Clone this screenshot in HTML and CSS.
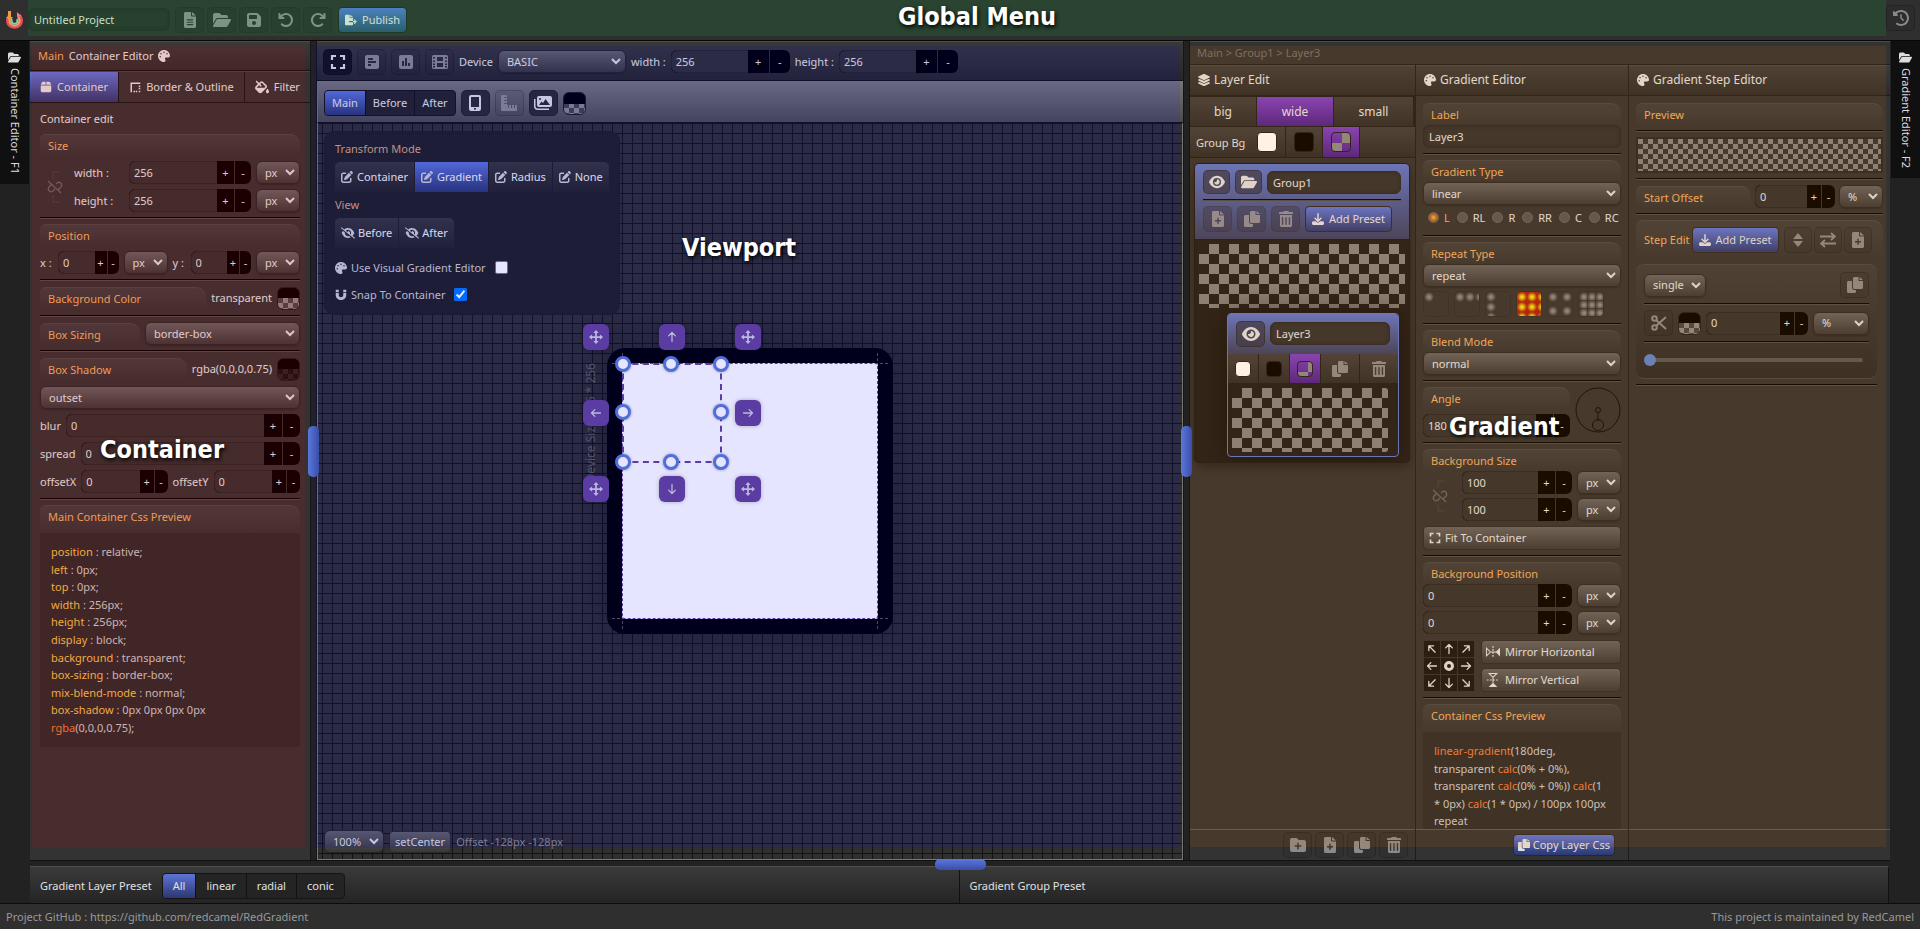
FILE: index.html
```html
<!DOCTYPE html>
<html lang="en">
<head>
<meta charset="utf-8">
<title>RedGradient</title>
<link rel="stylesheet" href="styles.css">
</head>
<body>
<svg class="sprite" aria-hidden="true">
  <symbol id="file-lines" viewBox="-64 0 512 512"><path fill-rule="evenodd" d="M48 0C22 0 0 22 0 48v416c0 26 22 48 48 48h288c26 0 48-22 48-48V144H256c-18 0-32-14-32-32V0zM256 0v112h128zM104 232h176c22 0 22 36 0 36H104c-22 0-22-36 0-36zm0 76h176c22 0 22 36 0 36H104c-22 0-22-36 0-36zm0 76h176c22 0 22 36 0 36H104c-22 0-22-36 0-36z"/></symbol>
  <symbol id="folder-open" viewBox="0 0 576 512"><path d="M88.700 223.800L0 375.800V96C0 60.700 28.700 32 64 32H181.500c17 0 33.300 6.700 45.300 18.700l26.500 26.500c12 12 28.300 18.700 45.300 18.700H416c35.300 0 64 28.700 64 64v32H144c-22.800 0-43.800 12.100-55.300 31.800zm27.600 16.100C122.100 230 132.600 224 144 224H544c11.500 0 22 6.100 27.700 16.100s5.700 22.200-.1 32.100l-112 192C453.900 474 443.400 480 432 480H32c-11.500 0-22-6.100-27.700-16.100s-5.700-22.200 .1-32.100l112-192z"/></symbol>
  <symbol id="floppy" viewBox="-32 0 512 512"><path fill-rule="evenodd" d="M64 32C28.700 32 0 60.700 0 96V416c0 35.300 28.700 64 64 64H384c35.300 0 64-28.700 64-64V173.300c0-17-6.700-33.300-18.700-45.300L352 50.700C340 38.700 323.700 32 306.700 32H64zm0 96c0-17.700 14.300-32 32-32H288c17.700 0 32 14.300 32 32v64c0 17.700-14.300 32-32 32H96c-17.700 0-32-14.300-32-32V128zM224 288a64 64 0 1 1 0 128 64 64 0 1 1 0-128z"/></symbol>
  <symbol id="undo" viewBox="0 0 512 512"><path d="M125.700 160H176c17.700 0 32 14.300 32 32s-14.300 32-32 32H48c-17.700 0-32-14.300-32-32V64c0-17.700 14.300-32 32-32s32 14.300 32 32v51.200L97.600 97.600c87.500-87.500 229.300-87.500 316.800 0s87.500 229.300 0 316.800s-229.300 87.500-316.800 0c-12.500-12.500-12.500-32.800 0-45.300s32.800-12.500 45.300 0c62.500 62.500 163.800 62.500 226.300 0s62.500-163.800 0-226.300s-163.800-62.500-226.300 0L125.700 160z"/></symbol>
  <symbol id="redo" viewBox="0 0 512 512"><path transform="matrix(-1 0 0 1 512 0)" d="M125.700 160H176c17.700 0 32 14.300 32 32s-14.300 32-32 32H48c-17.700 0-32-14.300-32-32V64c0-17.700 14.300-32 32-32s32 14.300 32 32v51.200L97.600 97.600c87.500-87.500 229.300-87.500 316.800 0s87.500 229.300 0 316.800s-229.300 87.500-316.800 0c-12.500-12.500-12.500-32.800 0-45.300s32.800-12.500 45.300 0c62.500 62.500 163.800 62.500 226.300 0s62.500-163.800 0-226.300s-163.800-62.500-226.300 0L125.700 160z"/></symbol>
  <symbol id="history" viewBox="0 0 512 512"><path d="M75 75L41 41C25.900 25.900 0 36.600 0 57.900V168c0 13.300 10.700 24 24 24H134.100c21.400 0 32.100-25.900 17-41l-30.800-30.800C155 85.500 203 64 256 64c106 0 192 86 192 192s-86 192-192 192c-40.800 0-78.600-12.700-109.700-34.400c-14.500-10.100-34.400-6.600-44.600 7.900s-6.600 34.400 7.900 44.600C151.200 495 201.700 512 256 512c141.400 0 256-114.600 256-256S397.400 0 256 0C185.300 0 121.300 28.700 75 75zm181 53c-13.300 0-24 10.700-24 24V256c0 6.400 2.500 12.500 7 17l72 72c9.400 9.400 24.600 9.400 33.900 0s9.400-24.600 0-33.900l-65-65V152c0-13.300-10.700-24-24-24z"/></symbol>
  <symbol id="export" viewBox="0 0 576 512"><path fill-rule="evenodd" d="M48 0C22 0 0 22 0 48v416c0 26 22 48 48 48h288c26 0 48-22 48-48v-96H216c-44 0-44-64 0-64h168V144H256c-18 0-32-14-32-32V0zM256 0v112h128zM384 304h86l-40-40c-22-24 10-56 34-34l88 88c10 10 10 26 0 36l-88 88c-24 22-56-10-34-34l40-40h-86z"/></symbol>
  <symbol id="palette" viewBox="0 0 512 512"><path fill-rule="evenodd" d="M512 256c0 .9 0 1.800 0 2.700c-.4 36.500-33.600 61.300-70.100 61.300H344c-26.500 0-48 21.500-48 48c0 3.400 .4 6.700 1 9.900c2.100 10.200 6.500 20 10.800 29.900c6.100 13.800 12.100 27.500 12.100 42c0 31.800-21.600 60.700-53.400 62c-3.500 .1-7 .2-10.600 .2C114.600 512 0 397.400 0 256S114.600 0 256 0S512 114.600 512 256zM128 288a32 32 0 1 0-64 0 32 32 0 1 0 64 0zm0-96a32 32 0 1 0 0-64 32 32 0 1 0 0 64zM288 96a32 32 0 1 0-64 0 32 32 0 1 0 64 0zm96 96a32 32 0 1 0 0-64 32 32 0 1 0 0 64z"/></symbol>
  <symbol id="box" viewBox="-32 0 512 512"><path d="M50.700 58.500L0 160H208V32H93.700C75.500 32 58.900 42.300 50.700 58.500zM240 160H448L397.300 58.500C389.100 42.300 372.500 32 354.300 32H240V160zm208 32H0V416c0 35.300 28.700 64 64 64H384c35.300 0 64-28.700 64-64V192z"/></symbol>
  <symbol id="border-style" viewBox="0 0 16 16"><path d="M2 2h13v2H4v11H2zM6 13h2v2H6zM9 13h2v2H9zM13 13h2v2h-2zM13 6h2v2h-2zM13 9h2v2h-2z"/></symbol>
  <symbol id="fill-drip" viewBox="0 0 576 512"><path d="M41.400 9.400C53.900-3.100 74.100-3.100 86.600 9.400L168 90.700l53.100-53.100c28.100-28.100 73.700-28.100 101.800 0L474.300 189.100c28.100 28.100 28.100 73.700 0 101.800L283.900 481.400c-37.500 37.500-98.300 37.500-135.800 0L30.600 363.900c-37.500-37.500-37.500-98.300 0-135.800L122.700 136 41.400 54.600c-12.500-12.500-12.500-32.800 0-45.300zm176 221.300L168 181.300 75.900 273.400c-4.200 4.200-7 9.300-8.400 14.600H386.700l42.300-42.300c3.100-3.100 3.100-8.200 0-11.300L277.700 82.900c-3.100-3.100-8.200-3.100-11.300 0L213.300 136l49.400 49.400c12.500 12.500 12.500 32.800 0 45.300s-32.800 12.500-45.300 0zM512 512c-35.300 0-64-28.700-64-64c0-25.200 32.600-79.600 51.200-108.700c6-9.400 19.500-9.400 25.500 0C543.400 368.400 576 422.800 576 448c0 35.300-28.700 64-64 64z"/></symbol>
  <symbol id="unlink" viewBox="0 0 24 32"><g fill="none" stroke="currentColor"><path d="M10 1h6M10 1v7M10 24v7M10 31h6" opacity=".3"/><path stroke-width="1.200" d="M5 10l13 12"/><path stroke-width="1.300" d="M9 13L6 16c-2 3 1 6 4 4l2-2M13 13l1-1c3-2 6 1 4 4l-3 3"/></g></symbol>
  <symbol id="edit" viewBox="0 0 512 512"><path d="M471.600 21.700c-21.900-21.900-57.300-21.900-79.200 0L362.300 51.700l97.900 97.900 30.100-30.100c21.900-21.900 21.900-57.300 0-79.200L471.600 21.700zm-299.200 220c-6.100 6.100-10.800 13.600-13.500 21.900l-29.600 88.800c-2.900 8.600-.6 18.100 5.800 24.600s15.900 8.700 24.600 5.800l88.800-29.600c8.200-2.700 15.700-7.400 21.900-13.500L437.700 172.300 339.700 74.300 172.400 241.700zM96 64C43 64 0 107 0 160V416c0 53 43 96 96 96H352c53 0 96-43 96-96V320c0-17.700-14.300-32-32-32s-32 14.300-32 32v96c0 17.700-14.300 32-32 32H96c-17.700 0-32-14.300-32-32V160c0-17.700 14.300-32 32-32h96c17.700 0 32-14.300 32-32s-14.300-32-32-32H96z"/></symbol>
  <symbol id="eye" viewBox="0 0 576 512"><path fill-rule="evenodd" d="M288 32c-80.800 0-145.500 36.800-192.600 80.600C48.600 156 17.300 208 2.500 243.700c-3.300 7.900-3.300 16.700 0 24.600C17.300 304 48.600 356 95.400 399.400C142.500 443.200 207.200 480 288 480s145.500-36.800 192.600-80.600c46.800-43.500 78.100-95.400 93-131.100c3.300-7.900 3.300-16.700 0-24.600c-14.900-35.700-46.200-87.700-93-131.100C433.500 68.800 368.800 32 288 32zM144 256a144 144 0 1 1 288 0 144 144 0 1 1 -288 0zm144-64c0 35.300-28.700 64-64 64c-7.100 0-13.900-1.200-20.300-3.300c-5.500-1.800-11.900 1.600-11.700 7.400c.3 6.900 1.300 13.800 3.200 20.700c13.700 51.200 66.400 81.600 117.600 67.900s81.600-66.400 67.900-117.600c-11.100-41.500-47.800-69.400-88.600-71.100c-5.800-.2-9.200 6.100-7.400 11.700c2.100 6.400 3.300 13.200 3.300 20.300z"/></symbol>
  <symbol id="eye-slash" viewBox="0 0 640 512"><path d="M38.800 5.100C28.400-3.100 13.300-1.200 5.100 9.200S-1.200 34.700 9.200 42.900l592 464c10.400 8.200 25.500 6.300 33.700-4.100s6.300-25.500-4.100-33.700L525.600 386.700c39.600-40.600 66.400-86.100 79.900-118.400c3.300-7.900 3.300-16.700 0-24.600c-14.900-35.700-46.200-87.700-93-131.100C465.500 68.800 400.800 32 320 32c-68.200 0-125 26.300-169.300 60.800L38.800 5.100zM223.100 149.500C248.600 126.200 282.700 112 320 112c79.500 0 144 64.500 144 144c0 24.900-6.300 48.300-17.400 68.700L408 294.500c8.400-19.300 10.600-41.400 4.800-63.300c-11.100-41.500-47.800-69.400-88.600-71.100c-5.800-.2-9.200 6.100-7.400 11.700c2.100 6.400 3.300 13.200 3.300 20.300c0 10.200-2.400 19.800-6.600 28.300l-90.300-70.800zM373 389.900c-16.400 6.500-34.300 10.100-53 10.100c-79.500 0-144-64.500-144-144c0-6.900 .5-13.600 1.400-20.200L83.100 161.500C60.300 191.200 44 220.800 34.500 243.700c-3.300 7.900-3.300 16.700 0 24.600c14.900 35.700 46.200 87.700 93 131.100C174.500 443.200 239.200 480 320 480c47.800 0 89.900-12.900 126.200-32.500L373 389.900z"/></symbol>
  <symbol id="trash" viewBox="-32 0 512 512"><path fill-rule="evenodd" d="M135 18L128 32H20C8 32 0 40 0 52v24c0 12 8 20 20 20h408c12 0 20-8 20-20V52c0-12-8-20-20-20H320l-7-14C307 7 296 0 284 0H164c-12 0-23 7-29 18zM32 128v336c0 26 22 48 48 48h288c26 0 48-22 48-48V128zm80 64c20 0 24 8 24 20v220c0 20-44 20-44 0V212c0-12 8-20 20-20zm112 0c16 0 22 8 22 20v220c0 20-44 20-44 0V212c0-12 6-20 22-20zm112 0c12 0 20 8 20 20v220c0 20-44 20-44 0V212c0-12 4-20 24-20z"/></symbol>
  <symbol id="copy" viewBox="0 0 512 512"><path d="M0 176c0-26 22-48 48-48h112v208c0 44 36 80 80 80h48v48c0 26-22 48-48 48H48c-26 0-48-22-48-48zM240 0h128v112c0 9 7 16 16 16h128v208c0 26-22 48-48 48H240c-26 0-48-22-48-48V48c0-26 22-48 48-48zM400 0l112 96H400z"/></symbol>
  <symbol id="file-plus" viewBox="-64 0 512 512"><path fill-rule="evenodd" d="M48 0C22 0 0 22 0 48v416c0 26 22 48 48 48h288c26 0 48-22 48-48V144H256c-18 0-32-14-32-32V0zM256 0v112h128zM168 216h48v72h72v48h-72v72h-48v-72H96v-48h72z"/></symbol>
  <symbol id="folder-plus" viewBox="0 0 512 512"><path fill-rule="evenodd" d="M512 416c0 35.300-28.700 64-64 64H64c-35.300 0-64-28.700-64-64V96C0 60.700 28.700 32 64 32H192c20.100 0 39.100 9.500 51.200 25.600l19.200 25.600c6 8.100 15.500 12.800 25.600 12.800H448c35.300 0 64 28.700 64 64V416zM232 376c0 13.300 10.700 24 24 24s24-10.700 24-24V312h64c13.300 0 24-10.700 24-24s-10.700-24-24-24H280V200c0-13.300-10.700-24-24-24s-24 10.700-24 24v64H168c-13.300 0-24 10.700-24 24s10.700 24 24 24h64v64z"/></symbol>
  <symbol id="download" viewBox="0 0 512 512"><path d="M288 32c0-17.700-14.300-32-32-32s-32 14.300-32 32V274.700l-73.400-73.400c-12.500-12.500-32.800-12.500-45.300 0s-12.500 32.800 0 45.300l128 128c12.500 12.500 32.800 12.500 45.300 0l128-128c12.500-12.500 12.500-32.800 0-45.300s-32.800-12.500-45.300 0L288 274.700V32zM64 352c-35.300 0-64 28.700-64 64v32c0 35.300 28.700 64 64 64H448c35.300 0 64-28.700 64-64V416c0-35.300-28.700-64-64-64H346.500l-45.300 45.300c-25 25-65.500 25-90.500 0L165.500 352H64z"/></symbol>
  <symbol id="layers" viewBox="32 0 512 512"><path d="M264.500 5.200c14.900-6.900 32.100-6.900 47 0l218.600 101c8.500 3.900 13.900 12.400 13.900 21.800s-5.400 17.900-13.900 21.800l-218.600 101c-14.900 6.900-32.100 6.900-47 0L45.900 149.800C37.400 145.800 32 137.300 32 128s5.400-17.900 13.900-21.800L264.500 5.200zM476.900 209.600l53.200 24.600c8.500 3.900 13.900 12.400 13.900 21.800s-5.400 17.900-13.900 21.800l-218.600 101c-14.900 6.900-32.100 6.900-47 0L45.900 277.800C37.400 273.800 32 265.300 32 256s5.400-17.900 13.900-21.800l53.200-24.600 152 70.200c23.400 10.800 50.400 10.800 73.800 0l152-70.200zm-152 198.200l152-70.200 53.200 24.600c8.500 3.900 13.900 12.400 13.900 21.800s-5.400 17.900-13.900 21.800l-218.600 101c-14.900 6.900-32.100 6.900-47 0L45.900 405.800C37.400 401.800 32 393.300 32 384s5.400-17.900 13.900-21.800l53.200-24.600 152 70.200c23.400 10.800 50.400 10.800 73.800 0z"/></symbol>
  <symbol id="expand" viewBox="0 0 16 16"><path fill="none" stroke="currentColor" stroke-width="2.200" d="M2 6V2h4M10 2h4v4M14 10v4h-4M6 14H2v-4"/></symbol>
  <symbol id="poll-h" viewBox="0 0 16 16"><path fill-rule="evenodd" d="M3 1h10a2 2 0 0 1 2 2v10a2 2 0 0 1-2 2H3a2 2 0 0 1-2-2V3a2 2 0 0 1 2-2zM4 4v2h5V4zM4 7v2h8V7zM4 10v2h3v-2z"/></symbol>
  <symbol id="poll-v" viewBox="0 0 16 16"><path fill-rule="evenodd" d="M3 1h10a2 2 0 0 1 2 2v10a2 2 0 0 1-2 2H3a2 2 0 0 1-2-2V3a2 2 0 0 1 2-2zM4 7v5h2V7zM7 4v8h2V4zM10 9v3h2V9z"/></symbol>
  <symbol id="film" viewBox="0 0 16 16"><path fill-rule="evenodd" d="M1.500 1h13A1.500 1.500 0 0 1 16 2.500v11a1.500 1.500 0 0 1-1.500 1.500h-13A1.500 1.500 0 0 1 0 13.500v-11A1.500 1.500 0 0 1 1.500 1zM1 3v1.500h2V3zm0 3.500V8h2V6.500zm0 3V11h2V9.500zM1 12v1.500h2V12zM13 3v1.500h2V3zm0 3.500V8h2V6.500zm0 3V11h2V9.500zM13 12v1.500h2V12zM5 3v4h6V3zM5 9v4h6V9z"/></symbol>
  <symbol id="mobile" viewBox="0 0 16 16"><path fill-rule="evenodd" d="M4 0h8a2 2 0 0 1 2 2v12a2 2 0 0 1-2 2H4a2 2 0 0 1-2-2V2a2 2 0 0 1 2-2zM4 2v10h8V2zM7 13v1.500h2V13z"/></symbol>
  <symbol id="ruler" viewBox="0 0 16 16"><path d="M1 0h4a1 1 0 0 1 1 1v1H3v1h3v2H3v1h3v2H3v1h3v1h1v3h1v-3h2v3h1v-3h2v3h1v-3h1a1 1 0 0 1 1 1v4a1 1 0 0 1-1 1H1a1 1 0 0 1-1-1V1a1 1 0 0 1 1-1z"/></symbol>
  <symbol id="images" viewBox="0 0 18 16"><path fill-rule="evenodd" d="M5 1h11a2 2 0 0 1 2 2v7a2 2 0 0 1-2 2H5a2 2 0 0 1-2-2V3a2 2 0 0 1 2-2zM6 3a1 1 0 1 0 0 2 1 1 0 0 0 0-2zM5 10h11l-4.500-6L9 8 7.500 6.500zM0 4h1.500v7A2.500 2.500 0 0 0 4 13.500h11V15H4a4 4 0 0 1-4-4z"/></symbol>
  <symbol id="magnet" viewBox="0 0 16 16"><path d="M1 1h4v3H1zM11 1h4v3h-4zM1 5h4v3c0 4 6 4 6 0V5h4v3c0 9-14 9-14 0z"/></symbol>
  <symbol id="move" viewBox="0 0 16 16"><path d="M8 0l3 3.500H9V7h3.500V5L16 8l-3.500 3V9H9v3.500h2L8 16l-3-3.500h2V9H3.500v2L0 8l3.500-3v2H7V3.500H5z"/></symbol>
  <symbol id="arrow" viewBox="0 0 16 16"><path fill="none" stroke="currentColor" stroke-width="1.700" stroke-linecap="round" stroke-linejoin="round" d="M2 8h12M9.500 3.500L14 8l-4.500 4.500"/></symbol>
  <symbol id="sort" viewBox="0 0 16 16"><path d="M8 1l5 6H3zM8 15l5-6H3z"/></symbol>
  <symbol id="swap" viewBox="0 0 16 16"><path fill="none" stroke="currentColor" stroke-width="1.800" d="M0 4.500h14M11 1l4 3.500L11 8M16 11.500H2M5 8l-4 3.500L5 15"/></symbol>
  <symbol id="scissors" viewBox="0 0 16 16"><g fill="none" stroke="currentColor" stroke-width="2"><circle cx="3.500" cy="3.500" r="2.300"/><circle cx="3.500" cy="12.500" r="2.300"/><path d="M5 5l10 9M5 11l10-9"/></g></symbol>
  <symbol id="mirror-h" viewBox="0 0 16 16"><path d="M16 3v10l-5-5z"/><path fill="none" stroke="currentColor" d="M.5 3.500v9L5 8zM5.500 8h6" stroke-width="1.200"/><path fill="none" stroke="currentColor" stroke-width="1.400" stroke-dasharray="2 1.500" d="M8 1v14"/></symbol>
  <symbol id="mirror-v" viewBox="0 0 16 16"><path d="M3 16h10l-5-5z"/><path fill="none" stroke="currentColor" d="M3.500 .5h9L8 5zM8 5v6" stroke-width="1.200"/><path fill="none" stroke="currentColor" stroke-width="1.400" stroke-dasharray="2 1.500" d="M1 8h14"/></symbol>
</svg>

<header class="topbar">
  <svg class="logo" viewBox="0 0 18 18" aria-label="RedGradient"><g fill="none"><path d="M5 4a7 7 0 1 0 9 0" stroke="#e8505b" stroke-width="3"/><path d="M6 6a5 5 0 1 0 7 0" stroke="#f5a84a" stroke-width="2"/><path d="M7 8a3 3 0 1 0 5 0" stroke="#7fd0c0" stroke-width="2"/></g><path d="M12 1l4 4-4 1z" fill="#f0808a"/><path d="M3 0h3v6h2l-3 4-4-4h2z" fill="#f39c3c"/></svg>
  <input class="project-name text" aria-label="Project name" value="Untitled Project">
  <nav class="file-menu">
    <button class="ib" aria-label="New"><svg class="i i16"><use href="#file-lines"/></svg></button>
    <button class="ib" aria-label="Open"><svg class="i i18"><use href="#folder-open"/></svg></button>
    <button class="ib" aria-label="Save"><svg class="i i16"><use href="#floppy"/></svg></button>
    <button class="ib" aria-label="Undo"><svg class="i i16"><use href="#undo"/></svg></button>
    <button class="ib" aria-label="Redo"><svg class="i i16"><use href="#redo"/></svg></button>
  </nav>
  <button class="publish"><svg class="i i12"><use href="#export"/></svg>Publish</button>
  <button class="ib history" aria-label="History"><svg class="i i16"><use href="#history"/></svg></button>
  <div class="tint tint-green"><strong>Global Menu</strong></div>
</header>

<main class="work">
  <aside class="rail"><button class="rail-tab"><svg class="i"><use href="#folder-open"/></svg>Container Editor - F1</button></aside>

  <div class="desk">
  <div class="panels">
  <section class="panel left-panel">
    <h2 class="title"><span class="accent">Main</span> Container Editor <svg class="i i12"><use href="#palette"/></svg></h2>
    <nav class="tabs">
      <button class="on"><svg class="i i12"><use href="#box"/></svg>Container</button>
      <button><svg class="i i12"><use href="#border-style"/></svg>Border &amp; Outline</button>
      <button><svg class="i i14"><use href="#fill-drip"/></svg>Filter</button>
    </nav>
    <div class="stack left-body">
      <p class="sub">Container edit</p>
      <h3 class="legend">Size</h3>
      <div class="size-grid">
        <svg class="unlink"><use href="#unlink"/></svg>
        <label for="cw">width :</label>
        <span class="num"><input id="cw" value="256"><button>+</button><button>-</button></span>
        <select aria-label="width unit"><option>px</option></select>
        <label for="ch">height :</label>
        <span class="num"><input id="ch" value="256"><button>+</button><button>-</button></span>
        <select aria-label="height unit"><option>px</option></select>
      </div>
      <hr>
      <h3 class="legend">Position</h3>
      <div class="row">
        <label class="xy" for="px">x :</label><span class="num b12"><input id="px" value="0"><button>+</button><button>-</button></span><select aria-label="x unit"><option>px</option></select>
        <label class="xy" for="py">y :</label><span class="num b12"><input id="py" value="0"><button>+</button><button>-</button></span><select aria-label="y unit"><option>px</option></select>
      </div>
      <hr>
      <div class="row color-row"><h3 class="legend grow">Background Color</h3><span>transparent</span><button class="swatch" aria-label="Background color"></button></div>
      <hr>
      <div class="row"><h3 class="legend w100"><label for="bs">Box Sizing</label></h3><select id="bs" class="grow"><option>border-box</option></select></div>
      <hr>
      <div class="row color-row"><h3 class="legend grow">Box Shadow</h3><span>rgba(0,0,0,0.75)</span><button class="swatch dim" aria-label="Shadow color"></button></div>
      <select class="full" aria-label="Shadow type"><option>outset</option></select>
      <div class="row"><label for="bl">blur</label><span class="num b18"><input id="bl" value="0"><button>+</button><button>-</button></span></div>
      <div class="row"><label for="sp">spread</label><span class="num b18"><input id="sp" value="0"><button>+</button><button>-</button></span></div>
      <div class="row"><label for="ox">offsetX</label><span class="num b14"><input id="ox" value="0"><button>+</button><button>-</button></span><label for="oy">offsetY</label><span class="num b14"><input id="oy" value="0"><button>+</button><button>-</button></span></div>
      <hr>
      <div>
        <h3 class="legend tall">Main Container Css Preview</h3>
        <code class="code"><b>position</b> : relative;<br><b>left</b> : 0px;<br><b>top</b> : 0px;<br><b>width</b> : 256px;<br><b>height</b> : 256px;<br><b>display</b> : block;<br><b>background</b> : transparent;<br><b>box-sizing</b> : border-box;<br><b>mix-blend-mode</b> : normal;<br><b>box-shadow</b> : 0px 0px 0px 0px<br><i>rgba</i>(0,0,0,0.75);</code>
      </div>
    </div>
    <div class="tint tint-red"><strong>Container</strong></div>
  </section>

  <div class="gutter"><span class="grip"></span></div>

  <section class="panel view-panel">
    <div class="bar1">
      <button class="ib dark" aria-label="Fullscreen"><svg class="i i16"><use href="#expand"/></svg></button>
      <button class="ib" aria-label="Layout"><svg class="i i16"><use href="#poll-h"/></svg></button>
      <button class="ib" aria-label="Stats"><svg class="i i16"><use href="#poll-v"/></svg></button>
      <button class="ib" aria-label="Animation"><svg class="i i16"><use href="#film"/></svg></button>
      <label for="dev">Device</label><select id="dev" class="device-sel"><option>BASIC</option></select>
      <label for="vw">width :</label><span class="num b20"><input id="vw" value="256"><button>+</button><button>-</button></span>
      <label for="vh">height :</label><span class="num b20"><input id="vh" value="256"><button>+</button><button>-</button></span>
    </div>
    <div class="bar2">
      <div class="seg"><button class="on">Main</button><button>Before</button><button>After</button></div>
      <button class="ib solid" aria-label="Device frame"><svg class="i i16"><use href="#mobile"/></svg></button>
      <button class="ib" aria-label="Ruler"><svg class="i i16"><use href="#ruler"/></svg></button>
      <button class="ib solid" aria-label="Images"><svg class="i i18"><use href="#images"/></svg></button>
      <button class="swatch" aria-label="Canvas color"></button>
    </div>
    <div class="canvas">
      <div class="device">
        <span class="size-note">Device Size 256 * 256</span>
        <span class="guide guide-h"></span><span class="guide guide-v"></span>
        <div class="artboard">
          <div class="selection">
            <i class="dot x0 y0"></i><i class="dot x1 y0"></i><i class="dot x2 y0"></i>
            <i class="dot x0 y1"></i><i class="dot x2 y1"></i>
            <i class="dot x0 y2"></i><i class="dot x1 y2"></i><i class="dot x2 y2"></i>
          </div>
          <div class="movers">
            <button aria-label="Move top left"><svg class="i i14"><use href="#move"/></svg></button>
            <button aria-label="Move up"><svg class="i i12 up"><use href="#arrow"/></svg></button>
            <button aria-label="Move top right"><svg class="i i14"><use href="#move"/></svg></button>
            <button aria-label="Move left"><svg class="i i12 back"><use href="#arrow"/></svg></button>
            <span></span>
            <button aria-label="Move right"><svg class="i i12"><use href="#arrow"/></svg></button>
            <button aria-label="Move bottom left"><svg class="i i14"><use href="#move"/></svg></button>
            <button aria-label="Move down"><svg class="i i12 down"><use href="#arrow"/></svg></button>
            <button aria-label="Move bottom right"><svg class="i i14"><use href="#move"/></svg></button>
          </div>
        </div>
      </div>
      <div class="modes">
        <h3>Transform Mode</h3>
        <div class="mode-row"><button><svg class="i i12"><use href="#edit"/></svg>Container</button><button class="on"><svg class="i i12"><use href="#edit"/></svg>Gradient</button><button><svg class="i i12"><use href="#edit"/></svg>Radius</button><button><svg class="i i12"><use href="#edit"/></svg>None</button></div>
        <h3>View</h3>
        <div class="mode-row view"><button><svg class="i i14"><use href="#eye-slash"/></svg>Before</button><button><svg class="i i14"><use href="#eye-slash"/></svg>After</button></div>
        <label class="check"><svg class="i i12"><use href="#palette"/></svg>Use Visual Gradient Editor<input type="checkbox"></label>
        <label class="check"><svg class="i i12"><use href="#magnet"/></svg>Snap To Container<input type="checkbox" checked></label>
      </div>
      <div class="view-foot"><select aria-label="Zoom"><option>100%</option></select><button class="btn">setCenter</button><span>Offset -128px -128px</span></div>
    </div>
    <div class="tint tint-blue"><strong>Viewport</strong></div>
  </section>

  <div class="gutter"><span class="grip"></span></div>

  <section class="panel right-panel">
    <div class="crumbs">Main &gt; Group1 &gt; Layer3</div>
    <div class="columns">
      <section class="col">
        <h2 class="head"><svg class="i i12"><use href="#layers"/></svg>Layer Edit</h2>
        <div class="col-body">
          <div class="sizes"><button>big</button><button class="on">wide</button><button>small</button></div>
          <div class="cells groupbg"><span>Group Bg</span><button aria-label="White"><i class="chip white"></i></button><button aria-label="Black"><i class="chip black"></i></button><button class="on" aria-label="Checker"><i class="chip check-chip"></i></button></div>
          <article class="group">
            <div class="group-head">
              <div class="row"><button class="ib eye" aria-label="Toggle group"><svg class="i i16"><use href="#eye"/></svg></button><button class="ib eye" aria-label="Open group"><svg class="i i16"><use href="#folder-open"/></svg></button><input class="text grow" aria-label="Group name" value="Group1"></div>
              <hr>
              <div class="row"><button class="ib" aria-label="Add layer"><svg class="i i16"><use href="#file-plus"/></svg></button><button class="ib" aria-label="Duplicate"><svg class="i i16"><use href="#copy"/></svg></button><button class="ib" aria-label="Delete"><svg class="i i16"><use href="#trash"/></svg></button><button class="blue"><svg class="i i12"><use href="#download"/></svg>Add Preset</button></div>
            </div>
            <div class="checker"></div>
            <article class="layer">
              <div class="layer-head row"><button class="ib eye" aria-label="Toggle layer"><svg class="i i18"><use href="#eye"/></svg></button><input class="text grow" aria-label="Layer name" value="Layer3"></div>
              <div class="cells layerbg"><button aria-label="White"><i class="chip white"></i></button><button aria-label="Black"><i class="chip black"></i></button><button class="on" aria-label="Checker"><i class="chip check-chip"></i></button><button class="wide" aria-label="Duplicate layer"><svg class="i i16"><use href="#copy"/></svg></button><button class="wide" aria-label="Delete layer"><svg class="i i16"><use href="#trash"/></svg></button></div>
              <div class="checker"></div>
            </article>
          </article>
        </div>
        <div class="col-foot"><button class="ib" aria-label="New group"><svg class="i i16"><use href="#folder-plus"/></svg></button><button class="ib" aria-label="New layer"><svg class="i i16"><use href="#file-plus"/></svg></button><button class="ib" aria-label="Duplicate"><svg class="i i16"><use href="#copy"/></svg></button><button class="ib" aria-label="Delete"><svg class="i i16"><use href="#trash"/></svg></button></div>
      </section>

      <section class="col">
        <h2 class="head"><svg class="i i12"><use href="#palette"/></svg>Gradient Editor</h2>
        <div class="col-body pad stack">
          <div><h3 class="legend"><label for="lb">Label</label></h3><input id="lb" class="text full" value="Layer3"></div>
          <hr>
          <div><h3 class="legend"><label for="gt">Gradient Type</label></h3><select id="gt" class="full"><option>linear</option></select>
            <div class="radios"><label class="accent"><input type="radio" name="g" checked>L</label><label><input type="radio" name="g">RL</label><label><input type="radio" name="g">R</label><label><input type="radio" name="g">RR</label><label><input type="radio" name="g">C</label><label><input type="radio" name="g">RC</label></div></div>
          <hr>
          <div><h3 class="legend"><label for="rt">Repeat Type</label></h3><select id="rt" class="full"><option>repeat</option></select>
            <div class="repeats"><button class="r1" aria-label="no-repeat"></button><button class="r2" aria-label="repeat-x"></button><button class="r3" aria-label="repeat-y"></button><button class="r4" aria-label="repeat"></button><button class="r5" aria-label="space"></button><button class="r6" aria-label="round"></button></div></div>
          <hr>
          <div><h3 class="legend"><label for="bm">Blend Mode</label></h3><select id="bm" class="full"><option>normal</option></select></div>
          <hr>
          <div class="row angle"><div class="stack grow"><h3 class="legend"><label for="an">Angle</label></h3><span class="num"><input id="an" value="180"><button>+</button><button>-</button></span></div>
            <svg class="dial" viewBox="0 0 46 46"><circle cx="23" cy="23" r="22"/><path d="M23 25v9"/><circle cx="23" cy="23" r="2.500"/><circle cx="23" cy="38" r="5.500"/></svg></div>
          <hr>
          <div><h3 class="legend">Background Size</h3>
            <div class="bg-grid linked"><svg class="unlink"><use href="#unlink"/></svg>
              <span class="num"><input aria-label="Background width" value="100"><button>+</button><button>-</button></span><select aria-label="unit"><option>px</option></select>
              <span class="num"><input aria-label="Background height" value="100"><button>+</button><button>-</button></span><select aria-label="unit"><option>px</option></select></div>
            <button class="btn fit"><svg class="i i12"><use href="#expand"/></svg>Fit To Container</button></div>
          <hr>
          <div><h3 class="legend">Background Position</h3>
            <div class="bg-grid">
              <span class="num"><input aria-label="Background x" value="0"><button>+</button><button>-</button></span><select aria-label="unit"><option>px</option></select>
              <span class="num"><input aria-label="Background y" value="0"><button>+</button><button>-</button></span><select aria-label="unit"><option>px</option></select></div>
            <div class="mirror"><div class="pad9">
              <button aria-label="Top left"><svg class="i i12 nw"><use href="#arrow"/></svg></button><button aria-label="Top"><svg class="i i12 up"><use href="#arrow"/></svg></button><button aria-label="Top right"><svg class="i i12 ne"><use href="#arrow"/></svg></button>
              <button aria-label="Left"><svg class="i i12 back"><use href="#arrow"/></svg></button><button aria-label="Center"><i class="ring"></i></button><button aria-label="Right"><svg class="i i12"><use href="#arrow"/></svg></button>
              <button aria-label="Bottom left"><svg class="i i12 sw"><use href="#arrow"/></svg></button><button aria-label="Bottom"><svg class="i i12 down"><use href="#arrow"/></svg></button><button aria-label="Bottom right"><svg class="i i12 se"><use href="#arrow"/></svg></button></div>
              <div class="mirror-btns"><button class="btn"><svg class="i i14"><use href="#mirror-h"/></svg>Mirror Horizontal</button><button class="btn"><svg class="i i14"><use href="#mirror-v"/></svg>Mirror Vertical</button></div></div></div>
          <hr>
          <div><h3 class="legend tall">Container Css Preview</h3>
            <code class="code"><i>linear-gradient</i>(180deg,<br>transparent <i>calc</i>(0% + 0%),<br>transparent <i>calc</i>(0% + 0%)) <i>calc</i>(1<br>* 0px) <i>calc</i>(1 * 0px) / 100px 100px<br>repeat</code></div>
        </div>
        <div class="col-foot"><button class="blue copy-css"><svg class="i i12"><use href="#copy"/></svg>Copy Layer Css</button></div>
      </section>

      <section class="col">
        <h2 class="head"><svg class="i i12"><use href="#palette"/></svg>Gradient Step Editor</h2>
        <div class="col-body pad stack">
          <h3 class="legend">Preview</h3>
          <hr>
          <div class="preview"></div>
          <hr>
          <div class="row tight"><h3 class="legend grow"><label for="so">Start Offset</label></h3><span class="num b14 w80"><input id="so" value="0"><button>+</button><button>-</button></span><select aria-label="unit"><option>%</option></select></div>
          <hr>
          <div class="legend step"><span>Step Edit</span><button class="blue"><svg class="i i12"><use href="#download"/></svg>Add Preset</button><button class="ib" aria-label="Sort"><svg class="i i16"><use href="#sort"/></svg></button><button class="ib" aria-label="Reverse"><svg class="i i16"><use href="#swap"/></svg></button><button class="ib" aria-label="Add step"><svg class="i i16"><use href="#file-plus"/></svg></button></div>
          <div class="step-card stack">
            <div class="row between"><select class="single" aria-label="Step type"><option>single</option></select><button class="ib" aria-label="Duplicate step"><svg class="i i16"><use href="#copy"/></svg></button></div>
            <hr>
            <div class="row"><button class="ib" aria-label="Cut"><svg class="i i16"><use href="#scissors"/></svg></button><button class="swatch" aria-label="Step color"></button><span class="num b14"><input aria-label="Step offset" value="0"><button>+</button><button>-</button></span><select class="pct" aria-label="unit"><option>%</option></select></div>
            <hr>
            <input class="slider" type="range" value="0" aria-label="Step position">
          </div>
          <hr class="short">
        </div>
        <div class="col-foot"></div>
      </section>
    </div>
    <div class="tint tint-brown"><strong>Gradient</strong></div>
  </section>
  </div>

  <div class="presets">
    <span class="grip grip-h"></span>
    <section><h2>Gradient Layer Preset</h2><div class="seg"><button class="on">All</button><button>linear</button><button>radial</button><button>conic</button></div></section>
    <section><h2>Gradient Group Preset</h2></section>
  </div>
  </div>

  <aside class="rail"><button class="rail-tab"><svg class="i"><use href="#folder-open"/></svg>Gradient Editor - F2</button></aside>
</main>

<footer class="foot"><span>Project GitHub : <a href="https://github.com/redcamel/RedGradient">https://github.com/redcamel/RedGradient</a></span><span>This project is maintained by RedCamel</span></footer>
</body>
</html>
```
FILE: styles.css
```css
* { box-sizing: border-box; }
:root {
  --accent: #f0ab60;
  --blue: linear-gradient(#5c74d6, #2c3870);
  --purple: linear-gradient(#7c3ec4, #4c1f88);
}
body {
  margin: 0; height: 100vh; display: flex; flex-direction: column; overflow: hidden;
  background: #222; color: #e0e0e0;
  font: 11px/16px "Noto Sans", "Open Sans", sans-serif;
}
h2, h3, p { margin: 0; font-size: inherit; font-weight: 400; }
button, input, select { font: inherit; color: inherit; margin: 0; padding: 0; border: 0; background: none; }
button { display: flex; align-items: center; justify-content: center; gap: 5px; white-space: nowrap; }
label, span { white-space: nowrap; }
a { color: inherit; text-decoration: none; }
hr { width: 100%; height: 2px; margin: 0; border: 0; flex: none; background: #000; border-bottom: 1px solid #4c4c4c; }
.sprite { position: absolute; width: 0; height: 0; }
.i { width: 13px; height: 13px; flex: none; fill: currentColor; display: block; }
.i12 { width: 12px; height: 12px; }
.i14 { width: 14px; height: 14px; }
.i16 { width: 16px; height: 16px; }
.i18 { width: 18px; height: 18px; }
.up { transform: rotate(-90deg); } .down { transform: rotate(90deg); } .back { transform: rotate(180deg); }
.nw { transform: rotate(-135deg); } .ne { transform: rotate(-45deg); } .sw { transform: rotate(135deg); } .se { transform: rotate(45deg); }
.accent { color: var(--accent); }
.grow { flex: 1; min-width: 0; }
.full { width: 100%; }

/* controls */
select {
  appearance: none; width: 44px; height: 23px; padding: 0 16px 0 8px; flex: none;
  border: 1px solid #262626; border-radius: 6px; text-overflow: clip;
  background: url("data:image/svg+xml,%3Csvg xmlns='http://www.w3.org/2000/svg' viewBox='0 0 10 7'%3E%3Cpath fill='none' stroke='%23ddd' stroke-width='2' d='M1 1l4 4 4-4'/%3E%3C/svg%3E") right 4px center / 10px 7px no-repeat, linear-gradient(#626262, #383838);
  box-shadow: 0 1px 2px #0004;
}
select.full { width: 100%; } select.grow { width: auto; flex: 1; }
.text { height: 23px; padding: 0 5px; min-width: 0; border: 1px solid #262626; border-radius: 6px; background: #303030; box-shadow: inset 0 0 4px #0003; display: block; }
.num { --b: 17px; display: flex; flex: 1; min-width: 0; height: 23px; border-radius: 6px; overflow: hidden; background: #000; }
.stack > .num { flex: none; }
.num input { flex: 1; min-width: 0; width: 20px; padding: 0 4px; background: #303030; border: 1px solid #262626; border-right: 0; border-radius: 6px 0 0 6px; }
.num button { width: var(--b); flex: none; }
.num button + button { border-left: 1px solid #303030; }
.b12 { --b: 12px; } .b14 { --b: 14px; } .b18 { --b: 18px; } .b20 { --b: 21px; }
.btn { height: 24px; border: 1px solid #2a2a2a; border-radius: 4px; background: linear-gradient(#626262, #383838); }
.blue { height: 26px; padding: 0 6px; border: 1px solid #2b2622; border-radius: 4px; background: var(--blue); }
.ib { width: 29px; height: 26px; flex: none; border: 1px solid #0003; border-radius: 5px; background: #0000000d; color: #8a8a8a; }
.swatch {
  width: 23px; height: 23px; flex: none; border: 1px solid #1e1e1e; border-radius: 6px;
  background: linear-gradient(#000 50%, transparent 50%), repeating-conic-gradient(#888 0 25%, #444 0 50%) 0 0 / 10px 10px;
}
.swatch.dim { background: linear-gradient(#000 50%, #000b 50%), repeating-conic-gradient(#888 0 25%, #444 0 50%) 0 0 / 10px 10px; }
.legend { height: 22px; padding: 0 8px; line-height: 22px; color: var(--accent); border-top: 1px solid #484848; border-radius: 6px 10px 0 0; background: linear-gradient(#3e3e3e, #333); flex-shrink: 0; }
.legend.grow { flex: 1; }
.legend.tall { height: 28px; }
.row { display: flex; align-items: center; gap: 5px; }
.color-row { height: 24px; }
.stack { display: flex; flex-direction: column; gap: 5px; }
.between { justify-content: space-between; }
.code { display: block; padding: 10px 11px; font: inherit; line-height: 1.6; background: #2b2b2b; color: #c8c8c8; white-space: nowrap; }
.code b { font-weight: 400; color: #f0bf48; }
.code i { font-style: normal; color: #ee7c3c; }

/* coloured zones laid over the panels */
.tint { position: absolute; z-index: 5; pointer-events: none; }
.tint strong { position: absolute; font: 700 25px/30px "DejaVu Sans Condensed", "Noto Sans", sans-serif; color: #fff; text-shadow: 1px 2px 4px #000; }
.tint-green { inset: 0 34px 4px 28px; background: rgba(0, 255, 64, .1); }
.tint-green strong { left: 870px; top: 2px; }
.tint-red { inset: 4px 5px 13px 2px; background: rgba(255, 0, 0, .1); }
.tint-red strong { left: 68px; top: 389px; }
.tint-blue { inset: 4px 3px 12px -3px; background: rgba(0, 0, 255, .1); }
.tint-blue strong { left: 368px; top: 187px; }
.tint-brown { inset: 4px 4px 13px 0; background: rgba(255, 128, 0, .1); }
.tint-brown strong { left: 259px; top: 366px; }

/* top bar */
.topbar { position: relative; display: flex; align-items: center; height: 41px; padding: 0 5px 1px; flex: none; background: #2f2f2f; border-bottom: 1px solid #080808; }
.logo { width: 18px; height: 18px; margin-right: 5px; }
.project-name { width: 142px; margin-right: 5px; background: #2c2c2c; color: #ddd; }
.file-menu { display: flex; gap: 3px; margin-right: 6px; }
.file-menu .ib { border-color: #00000026; }
.publish { width: 69px; height: 26px; border: 1px solid #222; border-radius: 4px; background: linear-gradient(#5374cc, #314c6f); }
.history { margin-left: auto; margin-bottom: 3px; border-color: #0003; }

/* frame */
.work { flex: 1; min-height: 0; display: flex; }
.rail { width: 30px; flex: none; }
.rail-tab { writing-mode: vertical-rl; width: 29px; padding: 10px 0; gap: 4px; background: #101010; color: #ddd; }
.rail:last-child .rail-tab { margin-left: auto; }
.desk { flex: 1; min-width: 0; display: flex; flex-direction: column; }
.panels { flex: 1; min-height: 0; display: flex; border-bottom: 1px solid #111; }
.panel { position: relative; display: flex; flex-direction: column; border-top: 1px solid #4c4c4c; background: #333; }
.gutter { width: 7px; flex: none; position: relative; border: solid #151515; border-width: 0 1px; }
.grip { position: absolute; z-index: 6; left: -3px; top: 385px; width: 11px; height: 51px; border-radius: 5px; background: linear-gradient(90deg, #5b78dc, #3a4da8); }
.grip-h { left: 50%; top: -2px; width: 51px; height: 11px; margin-left: -25px; background: linear-gradient(#5b78dc, #3a4da8); }

/* container editor */
.left-panel { width: 280px; flex: none; }
.title { height: 29px; padding: 0 8px; display: flex; align-items: center; gap: 5px; background: linear-gradient(#3a3a3a, #2c2c2c); border-bottom: 1px solid #111; }
.tabs { display: flex; height: 32px; border-bottom: 1px solid #151515; border-top: 1px solid #444; }
.tabs button { flex: 1 0 auto; padding: 0 9px; border-left: 1px solid #151515; }
.tabs button:first-child { border-left: 0; }
.tabs .on { background: var(--blue); }
.left-body { padding: 6px 10px; }
.sub { line-height: 20px; }
.size-grid { display: grid; grid-template-columns: 29px 50px 1fr 44px; column-gap: 5px; row-gap: 5px; align-items: center; }
.unlink { grid-row: span 2; width: 24px; height: 32px; color: #646464; justify-self: center; }
.xy { width: 13px; }
.w100 { width: 100px; }

/* viewport */
.view-panel { flex: 1; min-width: 0; background: #2e2e2e; }
.bar1 { display: flex; align-items: center; gap: 5px; height: 39px; padding: 1px 6px 0; background: linear-gradient(#393939, #272727); border-bottom: 1px solid #111; flex: none; }
.bar1 .num { flex: none; width: 119px; }
.bar1 .dark { background: #141414; color: #ddd; }
.device-sel { width: 128px; }
.bar2 { display: flex; align-items: center; gap: 5px; height: 42px; padding: 2px 6px 0; background: linear-gradient(#747474, #4c4c4c); border: solid #777; border-width: 1px 0 0 1px; border-bottom: 1px solid #151515; flex: none; }
.seg { display: flex; height: 26px; border: 1px solid #151515; border-radius: 4px; overflow: hidden; background: #242424; }
.seg button { padding: 0 7px; border-left: 1px solid #111; }
.seg button:first-child { border-left: 0; }
.seg .on { background: var(--blue); }
.bar2 .solid { background: #2b2b2b; border-color: #222; color: #ddd; }
.canvas {
  position: relative; flex: 1; min-height: 0; display: grid; place-items: center; overflow: hidden;
  border: solid #777; border-width: 0 1px 1px;
  background: linear-gradient(90deg, #131313 1px, transparent 1px) 4px 0 / 10px 10px, linear-gradient(#131313 1px, transparent 1px) 0 0 / 10px 10px, #303030;
}
.device { position: relative; isolation: isolate; padding: 15px; border-radius: 18px; background: #000; box-shadow: 0 0 40px #0004; }
.artboard { position: relative; width: 256px; height: 256px; background: #fff; border: 1px dashed #664396; border-radius: 3px; }
.guide { position: absolute; border: 0 dashed #555; z-index: -1; }
.guide-h { inset: 15px 5px; border-width: 1px 0; }
.guide-v { inset: 5px 15px; border-width: 0 1px; }
.size-note { position: absolute; right: 100%; top: 15px; margin-right: 8px; writing-mode: vertical-rl; transform: rotate(180deg); font-size: 12px; color: #5e5e5e; }
.selection { position: absolute; left: -1px; top: -1px; width: 100px; height: 100px; border: 2px dashed #664396; }
.dot { position: absolute; width: 16px; height: 16px; border: 3px solid #5b7bd8; border-radius: 50%; background: #fff; box-shadow: 0 0 3px #0006; }
.x0 { left: -9px; } .x1 { left: 39px; } .x2 { left: 89px; }
.y0 { top: -9px; } .y1 { top: 39px; } .y2 { top: 89px; }
.movers { position: absolute; left: -40px; top: -40px; display: grid; grid-template-columns: repeat(3, 26px); grid-auto-rows: 26px; gap: 50px; }
.movers button { border-radius: 6px; background: #664399; color: #cfcfd8; box-shadow: 0 0 4px #0004; }
.modes { position: absolute; left: 6px; top: 8px; padding: 10px 10px 6px; border: 1px solid #1e1e1e; border-radius: 10px; background: rgba(33, 33, 33, .95); }
.modes h3 { line-height: 14px; color: #d9a278; }
.mode-row { display: flex; width: max-content; gap: 1px; height: 30px; margin: 6px 0; }
.mode-row button { padding: 0 6px; gap: 4px; background: linear-gradient(#383838, #242424); color: #f0f0f0; }
.mode-row .i { color: #ccc; }
.mode-row.view button { gap: 3px; }
.mode-row button:first-child { border-radius: 5px 0 0 0; }
.mode-row button:last-child { border-radius: 0 5px 0 0; }
.mode-row .on { background: var(--blue); }
.check { display: flex; align-items: center; gap: 4px; height: 27px; color: #ccc; }
.check:first-of-type { margin-top: 5px; }
.check input { width: 13px; height: 13px; margin-left: 5px; }
.check input:not(:checked) { appearance: none; background: #fff; border: 1px solid #777; border-radius: 2px; }
.view-foot { position: absolute; left: 6px; bottom: 6px; display: flex; align-items: center; gap: 5px; color: #8a8a8a; }
.view-foot select { width: 60px; color: #ddd; }
.view-foot .btn { height: 22px; padding: 0 5px; color: #ddd; }

/* gradient editor */
.right-panel { width: 700px; flex: none; }
.crumbs { height: 22px; padding: 0 7px; line-height: 22px; color: #6e6e6e; }
.columns { flex: 1; min-height: 0; display: grid; grid-template-columns: 226px 213px 1fr; }
.col { display: flex; flex-direction: column; min-height: 0; min-width: 0; border-right: 1px solid #1c1c1c; }
.col:last-child { border-right: 0; }
.head { display: flex; align-items: center; gap: 4px; height: 32px; padding: 0 8px; font-size: 12px; flex: none; background: linear-gradient(#3c3c3c, #2b2b2b); border: solid #1c1c1c; border-width: 1px 0; box-shadow: inset 0 1px #4a4a4a; }
.col-body { flex: 1; min-height: 0; overflow: hidden; }
.pad { padding: 7px 7px 0; }
.col-body.stack > * { flex-shrink: 0; }
.col-foot { height: 31px; flex: none; display: flex; align-items: center; justify-content: flex-end; gap: 3px; padding: 0 7px; border-top: 1px solid #5a5a5a; }
.copy-css { height: 22px; padding: 0 4px; margin-right: 6px; gap: 3px; }
.sizes { display: grid; grid-template-columns: 67px 77px 1fr; height: 31px; border: 1px solid #1c1c1c; border-left: 0; font-size: 12px; box-shadow: inset 0 1px #4a4a4a; }
.sizes button { background: linear-gradient(#3e3e3e, #2b2b2b); border-right: 1px solid #1c1c1c; }
.sizes .on { background: var(--purple); }
.cells { display: flex; align-items: stretch; background: linear-gradient(#3e3e3e, #2b2b2b); border-bottom: 1px solid #1c1c1c; }
.cells button { border-right: 1px solid #1c1c1c; color: #8a8a8a; }
.cells .on { background: var(--purple); }
.groupbg { height: 31px; }
.groupbg span { width: 59px; padding-left: 6px; line-height: 31px; }
.groupbg button { width: 37px; }
.chip { width: 20px; height: 20px; border: 1px solid #1c1c1c; border-radius: 4px; }
.white { background: #fff; } .black { background: #000; }
.check-chip { background: repeating-conic-gradient(#888 0 25%, transparent 0 50%) 0 0 / 20px 20px; }
.layerbg .chip { width: 16px; height: 16px; }
.group { margin: 5px 5px 0 4px; padding-bottom: 5px; border: 1px solid #181818; border-radius: 5px; background: #1c1c1c; box-shadow: 0 4px 12px #0006; overflow: hidden; }
.group-head { padding: 6px 8px 7px; background: linear-gradient(#5c74cc, #3a3f63); border-bottom: 1px solid #181818; display: grid; grid-template-columns: minmax(0, 1fr); gap: 5px; }
.group-head .ib { background: #2a2a3a55; border-color: #2a2a3a44; color: #8c8c98; }
.ib.eye, .group-head .ib.eye { width: 27px; height: 24px; background: #2e2e40aa; border-color: #2228; color: #ddd; }
.checker { height: 64px; margin: 4px 4px 5px; border-radius: 3px; background: repeating-conic-gradient(#828282 0 25%, transparent 0 50%) 0 0 / 20px 20px; }
.layer { margin: 0 10px 0 32px; border: 1px solid #5c74cc; border-radius: 4px; overflow: hidden; background: #1c1c1c; box-shadow: 0 0 30px #0008; }
.layer-head { height: 39px; padding: 0 8px; background: linear-gradient(#5c74cc, #3a3f63); }
.layer-head .ib.eye { width: 29px; height: 26px; }
.layerbg { height: 31px; border-top: 1px solid #444; }
.layerbg button { width: 31px; }
.layerbg .wide { flex: 1; }
.layerbg button:last-child { border-right: 0; }
.layer .checker { margin: 4px 10px 4px 4px; }
.radios { display: flex; gap: 7px; padding: 0 5px; height: 25px; align-items: center; }
.radios label { display: flex; align-items: center; gap: 5px; }
.radios input { appearance: none; width: 11px; height: 11px; border-radius: 50%; border: 1px solid #666; background: #555; }
.radios input:checked { background: radial-gradient(#f0b060, #b06820 50%, #6a5040); }
.repeats { display: flex; gap: 5px; padding-top: 4px; height: 31px; }
.repeats button { width: 26px; height: 26px; border: 1px solid #2c2c2c; border-radius: 4px; background: radial-gradient(circle at 5px 5px, #888 1px, transparent 5px) no-repeat 0 0 / 10px 10px; }
.repeats .r2 { background-repeat: repeat-x; } .repeats .r3 { background-repeat: repeat-y; }
.repeats .r4 { background: radial-gradient(circle at 5px 5px, #f0e010 1px, #a82010 5px) 0 0 / 10px 10px; }
.repeats .r5 { background-repeat: space; } .repeats .r6 { background-repeat: round; background-size: 8px 8px; }
.angle { align-items: flex-start; }
.dial { width: 46px; height: 46px; fill: none; stroke: #080808; stroke-width: 1; flex: none; }
.bg-grid { display: grid; grid-template-columns: 1fr 44px; gap: 4px 5px; }
.bg-grid.linked { grid-template-columns: 34px 1fr 44px; }
.linked .unlink { align-self: center; }
.fit { width: 100%; margin-top: 5px; padding-left: 5px; gap: 4px; justify-content: flex-start; }
.mirror { display: flex; gap: 6px; margin-top: 6px; }
.pad9 { display: grid; grid-template-columns: repeat(3, 16px); grid-auto-rows: 16px; gap: 1px; padding: 1px; background: #303030; }
.pad9 button { background: #151515; }
.ring { width: 10px; height: 10px; border: 3px solid #ddd; border-radius: 50%; }
.mirror-btns { flex: 1; display: grid; gap: 3px; }
.mirror-btns .btn { justify-content: flex-start; padding-left: 4px; }
.preview { height: 36px; border: 2px solid #262626; background: repeating-conic-gradient(#333 0 25%, #828282 0 50%) 0 0 / 10px 10px; }
.tight { gap: 4px; }
.num.w80 { flex: none; width: 80px; }
.step { display: flex; align-items: center; gap: 2px; height: 39px; }
.step .blue { color: #ddd; margin-right: 3px; }
.step .ib, .step-card .ib { border-color: #0003; }
.step .ib { width: 28px; }
.step-card { margin-right: 6px; padding: 7px 8px 0; height: 115px; border: 1px solid #474747; border-width: 1px 0; border-radius: 8px; background: linear-gradient(#3b3b3b, #292929); }
.step-card > * { flex-shrink: 0; }
.single { width: 62px; }
.pct { width: 56px; }
.slider { appearance: none; width: calc(100% - 6px); height: 24px; }
.slider::-webkit-slider-runnable-track { height: 4px; border-radius: 2px; background: #555; }
.slider::-webkit-slider-thumb { appearance: none; width: 12px; height: 12px; margin-top: -4px; border-radius: 50%; background: #5b80c8; }
.short { width: calc(100% - 6px); }

/* presets and footer */
.presets { position: relative; display: grid; grid-template-columns: 1fr 1fr; height: 42px; flex: none; margin-right: 1px; padding-top: 5px; }
.presets section { display: flex; align-items: center; gap: 10px; padding: 1px 10px 0; background: linear-gradient(#3a3a3a, #242424); border-top: 1px solid #505050; border-right: 1px solid #111; }
.presets .seg button { padding: 0 10px; }
.foot { display: flex; align-items: center; justify-content: space-between; height: 26px; flex: none; padding: 0 6px; background: #2f2f2f; border-top: 1px solid #0c0c0c; color: #999; }
```
